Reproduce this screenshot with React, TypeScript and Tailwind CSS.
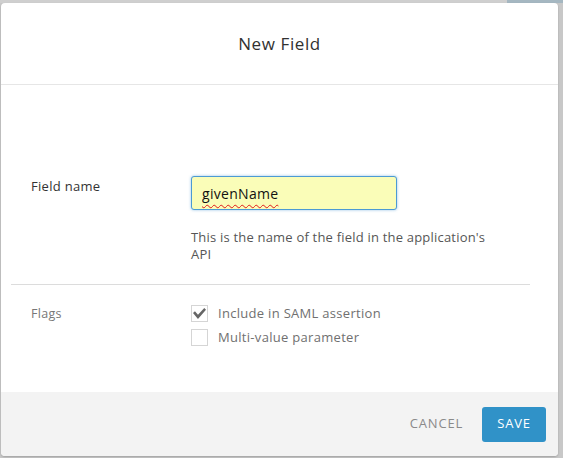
import React, { useState } from 'react';

const font = { fontFamily: '"Open Sans", "Noto Sans", Arial, sans-serif' };

function Check({ on }: { on: boolean }) {
  return (
    <span className="flex h-[17px] w-[17px] shrink-0 items-center justify-center border border-[#d5d5d5] bg-white">
      {on && (
        <svg viewBox="0 0 12 10" className="h-[11px] w-[13px]">
          <path d="M0 4.6 L4.6 10 L12 1.6 L10.4 0 L4.6 6.2 L1.8 3 Z" fill="#666" />
        </svg>
      )}
    </span>
  );
}

export default function App() {
  const [name, setName] = useState('givenName');
  const [saml, setSaml] = useState(true);
  const [multi, setMulti] = useState(false);

  return (
    <div className="h-[458px] w-[563px] overflow-hidden bg-[#c8c8c8]" style={font}>
      <div className="h-[3px] bg-[linear-gradient(to_right,#cfcfcf_507px,#a5b7c1_507px)]" />
      <div className="ml-[1px] flex h-[453px] w-[557px] flex-col overflow-hidden rounded-[4px] bg-white shadow-[0_1px_2px_rgba(0,0,0,0.2)]">
        {/* header */}
        <div className="flex h-[82px] items-center justify-center border-b border-[#e6e6e6]">
          <h2 className="text-[17px] tracking-[0.6px] text-[#313131]">New Field</h2>
        </div>

        {/* body */}
        <div className="flex-1 pl-[10px] pt-[91px]">
          <div className="flex px-[20px]">
            <label className="w-[160px] pt-[1px] text-[13px] tracking-[0.3px] text-[#333]">Field name</label>
            <div className="w-[312px]">
              <div className="relative h-[34px] w-[206px]">
                <input
                  value={name}
                  onChange={(e) => setName(e.target.value)}
                  spellCheck={false}
                  className="h-[34px] w-[206px] rounded-[3px] border border-[#4c9ad3] bg-[#fafdb8] px-[10px] text-[14px] tracking-[0.3px] text-[#111] shadow-[0_0_3px_rgba(76,154,211,0.6)] outline-none"
                />
                {/* spell-check squiggle under the value */}
                <span className="pointer-events-none absolute left-[11px] top-[8px] text-[14px] tracking-[0.3px] text-transparent underline decoration-[#e01818] decoration-wavy decoration-1 underline-offset-[4px]">
                  givenName
                </span>
              </div>
              <p className="mt-[19px] text-[13px] leading-[17px] tracking-[0.2px] text-[#565656]">
                This is the name of the field in the application's API
              </p>
            </div>
          </div>

          <div className="mt-[21px] mr-[28px] border-t border-[#dcdcdc]" />

          <div className="flex px-[20px] pt-[19px]">
            <span className="w-[160px] pt-[1px] text-[12.5px] tracking-[0.3px] text-[#777]">Flags</span>
            <div className="flex flex-col gap-[4px]">
              <label className="flex cursor-pointer items-center gap-[10px]" onClick={() => setSaml(!saml)}>
                <Check on={saml} />
                <span className="text-[13px] tracking-[0.3px] text-[#707070]">Include in SAML assertion</span>
              </label>
              <label className="flex cursor-pointer items-center gap-[10px]" onClick={() => setMulti(!multi)}>
                <Check on={multi} />
                <span className="text-[13px] tracking-[0.3px] text-[#707070]">Multi-value parameter</span>
              </label>
            </div>
          </div>
        </div>

        {/* footer */}
        <div className="flex h-[64px] items-center justify-end gap-[19px] bg-[#f3f3f3] pr-[12px]">
          <button className="text-[13px] tracking-[0.8px] text-[#8a8a8a]">CANCEL</button>
          <button className="h-[35px] w-[64px] rounded-[3px] bg-[#3092c8] text-[13px] tracking-[0.8px] text-white">
            SAVE
          </button>
        </div>
      </div>
    </div>
  );
}
